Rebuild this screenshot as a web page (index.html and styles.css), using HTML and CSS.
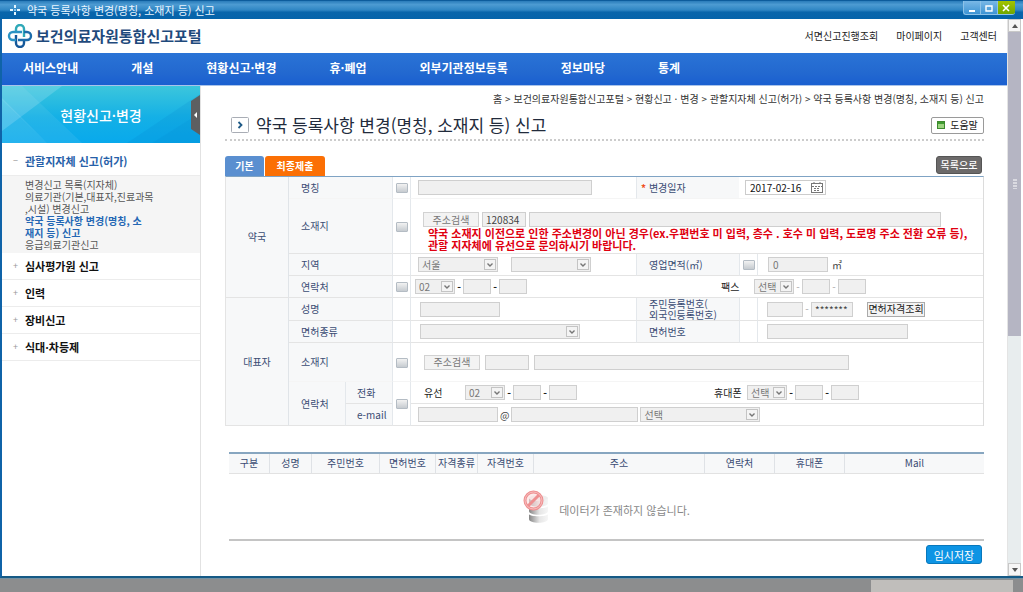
FILE: index.html
```html
<!DOCTYPE html>
<html lang="ko">
<head>
<meta charset="utf-8">
<title>약국 등록사항 변경(명칭, 소재지 등) 신고</title>
<link rel="stylesheet" href="styles.css">
</head>
<body>
<header class="titlebar">
  <svg class="titlebar-icon" viewBox="0 0 12 12" width="12" height="12" fill="none" stroke="#e4f6ff" stroke-width="2"><path d="M6 1v3M6 8v3M1 6h3M8 6h3"/><circle cx="6" cy="6" r="1" fill="#9fdcff" stroke="none"/></svg>
  <span class="titlebar-text">약국 등록사항 변경(명칭, 소재지 등) 신고</span>
  <div class="win-buttons">
    <button class="win-btn" aria-label="최소화"><svg viewBox="0 0 16 12" width="16" height="12"><path d="M5 8h6v2H5z" fill="#fff"/></svg></button>
    <button class="win-btn" aria-label="최대화"><svg viewBox="0 0 16 12" width="16" height="12"><path d="M5 4h6v5H5z" fill="none" stroke="#fff" stroke-width="1.4"/></svg></button>
    <button class="win-btn win-close" aria-label="닫기"><svg viewBox="0 0 16 12" width="16" height="12"><path d="M5 3l6 6M11 3L5 9" stroke="#fff" stroke-width="1.6"/></svg></button>
  </div>
</header>

<div class="window">
  <div class="page">
    <div class="top">
      <a class="logo" href="#">
        <svg viewBox="0 0 26 24" width="26" height="24" fill="none" stroke-width="2.4">
          <path d="M9 8V5a4 4 0 0 1 8 0v8" stroke="#2fa9b8"/>
          <path d="M17 16v3a4 4 0 0 1-8 0v-8" stroke="#15589a"/>
          <path d="M9 16H6a4 4 0 0 1 0-8h9" stroke="#2b93c4"/>
          <path d="M17 8h3a4 4 0 0 1 0 8h-9" stroke="#1c6cab"/>
        </svg>
        <span>보건의료자원통합신고포털</span>
      </a>
      <nav class="util">
        <a href="#">서면신고진행조회</a><a href="#">마이페이지</a><a href="#">고객센터</a>
      </nav>
    </div>
    <nav class="gnb">
      <a href="#">서비스안내</a><a href="#">개설</a><a href="#">현황신고·변경</a><a href="#">휴·폐업</a><a href="#">외부기관정보등록</a><a href="#">정보마당</a><a href="#">통계</a>
    </nav>
    <div class="columns">
      <aside class="side">
        <div class="side-title">
          <svg class="side-bg" viewBox="0 0 198 57" preserveAspectRatio="none"><path d="M0 0h60L0 45z" fill="#fff" opacity=".16"/><path d="M0 12L45 57H0z" fill="#fff" opacity=".12"/><path d="M0 0h20L80 57H45L0 14z" fill="#fff" opacity=".07"/><path d="M125 57L198 8v49z" fill="#0077c8" opacity=".14"/><path d="M150 57l48-30v30z" fill="#0077c8" opacity=".1"/></svg>
          <span>현황신고·변경</span>
          <button class="side-fold" aria-label="메뉴 접기"><svg viewBox="0 0 9 40" width="9" height="40"><path d="M9 0L0 6v28l9 6z" fill="#5d5f61"/><path d="M6 17v6l-3-3z" fill="#fff"/></svg></button>
        </div>
        <ul class="menu">
          <li class="open"><a class="menu-link" href="#"><i>−</i>관할지자체 신고(허가)</a>
            <ul class="sub">
              <li><a href="#">변경신고 목록(지자체)</a></li>
              <li><a href="#">의료기관(기본,대표자,진료과목<br>,시설) 변경신고</a></li>
              <li><a class="on" href="#">약국 등록사항 변경(명칭, 소<br>재지 등) 신고</a></li>
              <li><a href="#">응급의료기관신고</a></li>
            </ul>
          </li>
          <li><a class="menu-link" href="#"><i>+</i>심사평가원 신고</a></li>
          <li><a class="menu-link" href="#"><i>+</i>인력</a></li>
          <li><a class="menu-link" href="#"><i>+</i>장비신고</a></li>
          <li><a class="menu-link" href="#"><i>+</i>식대·차등제</a></li>
        </ul>
      </aside>

      <main class="main">
        <p class="crumb">홈 &gt; 보건의료자원통합신고포털 &gt; 현황신고 · 변경 &gt; 관할지자체 신고(허가) &gt; 약국 등록사항 변경(명칭, 소재지 등) 신고</p>
        <div class="heading">
          <svg viewBox="0 0 18 16" width="18" height="16"><rect x=".5" y=".5" width="17" height="15" rx="1" fill="#fff" stroke="#a9adb5"/><path d="M7.500 5l3 3-3 3" fill="none" stroke="#1e5a86" stroke-width="1.800"/></svg>
          <h1>약국 등록사항 변경(명칭, 소재지 등) 신고</h1>
          <button class="help"><i></i>도움말</button>
        </div>
        <div class="tabs">
          <button class="tab">기본</button><button class="tab tab-final">최종제출</button>
          <button class="list-btn">목록으로</button>
        </div>

        <table class="form">
          <colgroup><col class="c-group"><col class="c-label"><col class="c-sub"><col class="c-check"><col><col class="c-label2"><col class="c-check"><col></colgroup>
          <tr class="h-s no-line">
            <th rowspan="4" class="group">약국</th><th colspan="2">명칭</th>
            <td class="chk"><input type="checkbox" disabled aria-label="명칭 변경"></td>
            <td><div class="row"><input class="w-174" disabled aria-label="명칭"></div></td>
            <th class="inner"><label for="date"><b class="req">*</b> 변경일자</label></th>
            <td colspan="2"><div class="row date-row"><span class="date"><input id="date" value="2017-02-16"><button aria-label="달력"><svg viewBox="0 0 12 11" width="12" height="11" fill="none" stroke="#777"><rect x=".5" y="1.500" width="11" height="9"/><path d="M1 4.500h10M3 0v3M9 0v3M3 6.500h6M3 8.500h6" stroke-dasharray="2 1"/></svg></button></span></div></td>
          </tr>
          <tr class="h-addr">
            <th colspan="2">소재지</th><td class="chk"><input type="checkbox" disabled aria-label="소재지 변경"></td>
            <td colspan="4" class="addr"><div class="row in-5"><button class="find" disabled>주소검색</button><input class="w-44 strong" value="120834" disabled aria-label="우편번호"><input class="w-412" disabled aria-label="주소"></div>
              <p class="warn">약국 소재지 이전으로 인한 주소변경이 아닌 경우(ex.우편번호 미 입력, 층수 . 호수 미 입력, 도로명 주소 전환 오류 등),<br>관할 지자체에 유선으로 문의하시기 바랍니다.</p></td>
          </tr>
          <tr class="h-s">
            <th colspan="2">지역</th><td class="chk"></td>
            <td><div class="row gap-l"><select class="w-80" disabled aria-label="시도"><option>서울</option></select><select class="w-80" disabled aria-label="시군구"><option></option></select></div></td>
            <th class="inner"><label for="area">영업면적(㎡)</label></th><td class="chk"><input type="checkbox" disabled aria-label="영업면적 변경"></td>
            <td><div class="row in-3"><input id="area" class="w-60" value="0" disabled><span>㎡</span></div></td>
          </tr>
          <tr class="h-s">
            <th colspan="2">연락처</th><td class="chk"><input type="checkbox" disabled aria-label="연락처 변경"></td>
            <td><div class="row tel in-out"><select class="w-40" disabled aria-label="지역번호"><option>02</option></select><b>-</b><input class="w-28" disabled aria-label="국번"><b>-</b><input class="w-28" disabled aria-label="번호"></div></td>
            <td colspan="3"><div class="row tel fax"><span class="cap">팩스</span><select class="w-40" disabled aria-label="팩스 지역번호"><option>선택</option></select><b class="dim">-</b><input class="w-28" disabled aria-label="팩스 국번"><b class="dim">-</b><input class="w-28" disabled aria-label="팩스 번호"></div></td>
          </tr>
          <tr class="h-s">
            <th rowspan="5" class="group">대표자</th><th colspan="2">성명</th><td class="chk"></td>
            <td><div class="row in-2"><input class="w-80" disabled aria-label="성명"></div></td>
            <th class="inner tight">주민등록번호(<br>외국인등록번호)</th><td class="chk"></td>
            <td><div class="row tel in-2"><input class="w-36" disabled aria-label="주민등록번호 앞"><b class="dim">-</b><input class="w-42 strong" value="*******" disabled aria-label="주민등록번호 뒤"><button class="license">면허자격조회</button></div></td>
          </tr>
          <tr class="h-s">
            <th colspan="2">면허종류</th><td class="chk"></td>
            <td><div class="row in-2"><select class="w-160" disabled aria-label="면허종류"><option></option></select></div></td>
            <th class="inner"><label for="lic">면허번호</label></th><td class="chk"></td>
            <td><div class="row in-2"><input id="lic" class="w-141" disabled></div></td>
          </tr>
          <tr class="h-m no-line">
            <th colspan="2">소재지</th><td class="chk"><input type="checkbox" disabled aria-label="대표자 소재지 변경"></td>
            <td colspan="4"><div class="row gap-m in-7"><button class="find" disabled>주소검색</button><input class="w-44" disabled aria-label="대표자 우편번호"><input class="w-315" disabled aria-label="대표자 주소"></div></td>
          </tr>
          <tr class="h-s">
            <th rowspan="2">연락처</th><th class="split">전화</th><td class="chk" rowspan="2"><input type="checkbox" disabled aria-label="대표자 연락처 변경"></td>
            <td><div class="row tel in-7"><span class="cap-wide">유선</span><select class="w-40" disabled aria-label="유선 지역번호"><option>02</option></select><b>-</b><input class="w-28" disabled aria-label="유선 국번"><b>-</b><input class="w-28" disabled aria-label="유선 번호"></div></td>
            <td colspan="3"><div class="row tel mobile"><span class="cap-near">휴대폰</span><select class="w-40" disabled aria-label="휴대폰 앞자리"><option>선택</option></select><b>-</b><input class="w-28" disabled aria-label="휴대폰 국번"><b>-</b><input class="w-28" disabled aria-label="휴대폰 번호"></div></td>
          </tr>
          <tr class="h-s">
            <th class="split">e-mail</th>
            <td colspan="4"><div class="row gap-s"><input class="w-80" disabled aria-label="이메일 아이디"><span>@</span><input class="w-127" disabled aria-label="이메일 도메인"><select class="w-120" disabled aria-label="도메인 선택"><option>선택</option></select></div></td>
          </tr>
        </table>

        <table class="list">
          <colgroup><col class="l-41"><col class="l-42"><col class="l-68"><col class="l-56"><col class="l-42"><col class="l-56"><col><col class="l-70"><col class="l-70"><col class="l-139"></colgroup>
          <thead><tr><th>구분</th><th>성명</th><th>주민번호</th><th>면허번호</th><th>자격종류</th><th>자격번호</th><th>주소</th><th>연락처</th><th>휴대폰</th><th>Mail</th></tr></thead>
          <tbody><tr><td colspan="10"><div class="empty">
            <svg viewBox="0 0 26 36" width="26" height="36">
              <defs><linearGradient id="db"><stop offset="0" stop-color="#858585"/><stop offset=".55" stop-color="#e6e6e6"/><stop offset="1" stop-color="#f6f6f6"/></linearGradient></defs>
              <path d="M6 25c0 3 19 3 19 0v5c0 5-19 5-19 0z" fill="url(#db)"/>
              <path d="M6 17c0 3 19 3 19 0v5c0 5-19 5-19 0z" fill="url(#db)"/>
              <path d="M6 9c0 3 19 3 19 0v5c0 5-19 5-19 0z" fill="url(#db)"/>
              <ellipse cx="15.500" cy="9" rx="9.500" ry="3" fill="#eee"/>
              <circle cx="10.500" cy="11.500" r="8.500" fill="#fbdcdc" fill-opacity=".6" stroke="#ee8f90" stroke-width="3"/>
              <path d="M5 17L16 6" stroke="#ee8f90" stroke-width="3"/><circle cx="10.500" cy="11.500" r="8.500" fill="none" stroke="#f9c9c9" stroke-width=".8"/>
            </svg>
            <span>데이터가 존재하지 않습니다.</span></div></td></tr></tbody>
        </table>
        <div class="actions"><button class="save">임시저장</button></div>
      </main>
    </div>
  </div>
  <div class="scroll">
    <span class="scroll-btn"><svg viewBox="0 0 6 4" width="6" height="4"><path d="M0 4l3-4 3 4z" fill="#555"/></svg></span>
    <span class="scroll-thumb"><svg viewBox="0 0 4 10" width="4" height="10"><path d="M0 1h4M0 4h4M0 7h4M0 10h4" stroke="#fff"/></svg></span>
    <span class="scroll-track"></span>
    <span class="scroll-btn"><svg viewBox="0 0 6 4" width="6" height="4"><path d="M0 0l3 4 3-4z" fill="#555"/></svg></span>
  </div>
</div>
<footer class="hbar"><span class="hbar-thumb"></span></footer>
</body>
</html>
```

FILE: styles.css
```css
* { box-sizing: border-box; }
body {
  margin: 0;
  min-height: 100vh;
  display: flex;
  flex-direction: column;
  font: 10px/12px "Noto Sans CJK KR", "Noto Sans", sans-serif;
  color: #444;
  background: #fff;
}
button, input, select { font: inherit; color: inherit; margin: 0; }
button { cursor: pointer; padding: 0; }
a { color: inherit; text-decoration: none; }
ul { list-style: none; margin: 0; padding: 0; }
i { font-style: normal; }
h1, p { margin: 0; }
table { border-collapse: separate; border-spacing: 0; table-layout: fixed; width: 100%; }

/* window frame */
.titlebar {
  display: flex;
  align-items: center;
  gap: 6px;
  height: 19px;
  padding: 0 8px 0 9px;
  border-top: 1px solid #0d5c9c;
  background: linear-gradient(#2a7cba 0, #4d9bd2 20%, #2f86c4 50%, #0965ab 62%, #0563aa 100%);
}
.titlebar-text { flex: 1; color: #e9f5ff; font-size: 11px; line-height: 16px; }
.win-buttons { display: flex; align-self: flex-start; }
.win-btn {
  height: 14px;
  width: 17px;
  border: 1px solid #8cc2e8;
  border-top: 0;
  border-right: 0;
  background: linear-gradient(#7ab8e6, #3d94d4);
  display: flex;
  align-items: center;
}
.win-btn:first-child { border-radius: 0 0 0 3px; }
.win-close { width: 18px; background: linear-gradient(#a4c400, #6fa600); border-radius: 0 0 3px 0; }
.window { flex: 1; display: flex; border-left: 2px solid #0f63a8; border-bottom: 2px solid #155a86; }
.page { flex: 1; min-width: 0; display: flex; flex-direction: column; }

/* site header */
.top { display: flex; align-items: center; justify-content: space-between; height: 34px; padding: 0 10px 0 5px; }
.logo { display: flex; align-items: center; gap: 3px; color: #1f4a7c; font-size: 15px; font-weight: 700; line-height: 20px; }
.util { display: flex; gap: 18px; color: #222; }
.gnb {
  display: flex;
  align-items: center;
  gap: 53px;
  height: 33px;
  padding: 0 21px 2px;
  color: #fff;
  font-size: 12px;
  font-weight: 700;
  line-height: 16px;
  background: linear-gradient(#2a73d6, #2369d0 60%, #1a5fd0);
  border-bottom: 1px solid #a9c3ea;
}
.columns { flex: 1; display: flex; }

/* side menu */
.side { width: 199px; flex: none; border-right: 1px solid #e2e2e2; }
.side-title {
  position: relative;
  display: flex;
  align-items: center;
  justify-content: center;
  height: 57px;
  color: #fff;
  font-size: 14px;
  font-weight: 500;
  line-height: 20px;
  background: linear-gradient(#3cc6dc, #14b0e6 55%, #08a9ec);
}
.side-title span { position: relative; }
.side-bg { position: absolute; inset: 0; width: 100%; height: 100%; }
.side-fold { position: absolute; right: 0; top: 9px; border: 0; background: none; height: 40px; }
.menu > li { border-bottom: 1px solid #ececec; }
.menu > .open { border-bottom: 0; }
.menu-link { display: flex; align-items: center; height: 26px; padding-left: 11px; color: #111; font-size: 11px; font-weight: 700; }
.menu-link i { width: 12px; color: #999; font-size: 9px; font-weight: 400; }
.open > .menu-link { height: 32px; padding-top: 4px; color: #2660a8; }
.sub { padding: 3px 0 2px 23px; background: #f5f5f5; border-top: 1px solid #ececec; line-height: 12px; color: #555; }
.sub .on { color: #2467b4; font-weight: 700; }

/* main column */
.main { flex: 1; min-width: 0; padding: 5px 23px 12px 24px; }
.crumb { text-align: right; line-height: 16px; white-space: nowrap; color: #333; }
.heading { display: flex; align-items: center; gap: 7px; height: 34px; padding: 4px 0 0 6px; border-bottom: 2px dotted #ccc; }
.heading h1 { flex: 1; font-size: 17px; font-weight: 400; line-height: 22px; color: #222b3c; }
.help {
  display: flex;
  align-items: center;
  justify-content: center;
  gap: 5px;
  width: 53px;
  height: 17px;
  border: 1px solid #9a9a9a;
  border-radius: 2px;
  background: #fff;
  color: #222;
}
.help i { width: 8px; height: 8px; border: 1px solid #3d8a2e; background: linear-gradient(#3f9a30 25%, #9bd37f 25%); }
.tabs { display: flex; gap: 1px; margin-top: 15px; }
.tab {
  width: 39px;
  height: 20px;
  border: 0;
  border-radius: 3px 3px 0 0;
  background: #5a8fd0;
  color: #fff;
  font-weight: 700;
}
.tab-final { width: 60px; background: #fb6f04; }
.list-btn { margin-left: auto; margin-right: 2px; width: 46px; height: 18px; border: 1px solid #555; border-radius: 3px; background: #6c6a6a; color: #fff; font-weight: 500; }

/* declaration form */
.form { border-top: 1px solid #7fa3c4; border-right: 1px solid #dcdcdc; border-left: 1px solid #e4e4e4; }
.c-group { width: 63px; }
.c-label { width: 56px; }
.c-sub { width: 47px; }
.c-check { width: 19px; }
.c-label2 { width: 103px; }
.form th, .form td { padding: 0; border-bottom: 1px solid #e4e4e4; }
.form th { padding-left: 12px; text-align: left; font-weight: 400; color: #3a4c74; background: #f7f8f9; }
.form .group { padding: 0; text-align: center; border-right: 1px solid #e0e4e8; }
.form .no-line th, .form .no-line td { border-bottom-color: #f5f5f5; }
.form .no-line .group { border-bottom-color: #e4e4e4; }
.form .chk { border-left: 1px solid #e4e8ec; border-right: 1px solid #e4e8ec; text-align: center; line-height: 10px; }
.form .inner { border-left: 1px solid #e4e8ec; }
.form .split { border-left: 1px solid #e4e8ec; padding-left: 11px; }
.form .tight { line-height: 11px; }
.h-s { height: 22px; }
.h-m { height: 39px; }
.h-addr { height: 55px; }
.req { color: #f0501e; }
.form th:has(.req) { padding-left: 4px; }
.row { display: flex; align-items: center; gap: 3px; padding-left: 7px; line-height: 14px; }
.gap-s { gap: 2px; }
.gap-m { gap: 5px; }
.gap-l { gap: 13px; }
.in-2 { padding-left: 9px; }
.in-3 { padding-left: 10px; gap: 4px; }
.in-5 { padding-left: 12px; }
.in-7 { padding-left: 13px; }
.in-out { padding-left: 4px; }
.date-row { padding-left: 6px; }
.fax { padding-left: 85px; }
.mobile { padding-left: 78px; }
.cap { width: 33px; color: #222; }
.cap-wide { width: 41px; color: #222; }
.cap-near { width: 33px; color: #222; white-space: nowrap; }
.tel { gap: 0; }
.tel b { width: 8px; text-align: center; color: #222; line-height: 12px; }
.tel .dim { color: #aaa; font-weight: 400; }
input, select { height: 15px; border: 1px solid #cfcfcf; border-radius: 0; background: #f0f0f0; color: #777; padding: 0 4px; opacity: 1; }
input.strong { color: #444; padding: 0 3px; }
select {
  appearance: none;
  padding: 0 14px 0 3px;
  line-height: 12px;
  background: #f0f0f0 url("data:image/svg+xml,%3Csvg xmlns='http://www.w3.org/2000/svg' width='12' height='11'%3E%3Crect x='.5' y='.5' width='11' height='10' fill='%23f4f4f4' stroke='%23c4c4c4'/%3E%3Cpath d='M3.500 4.500l2.500 2.500 2.500-2.500' fill='none' stroke='%23777' stroke-width='1.400'/%3E%3C/svg%3E") right 1px center no-repeat;
}
input[type="checkbox"] { appearance: none; width: 12px; height: 10px; padding: 0; border: 1px solid #b4bcc4; border-radius: 1px; background: linear-gradient(#f2f2f2, #c6cbd0); vertical-align: middle; }
.w-28 { width: 28px; } .w-36 { width: 36px; } .w-40 { width: 40px; } .w-42 { width: 42px; } .w-44 { width: 44px; }
.w-60 { width: 60px; } .w-80 { width: 80px; } .w-120 { width: 120px; } .w-127 { width: 127px; } .w-141 { width: 141px; }
.w-160 { width: 160px; } .w-174 { width: 174px; } .w-315 { width: 315px; } .w-412 { width: 412px; }
.find { width: 56px; height: 15px; border: 1px solid #d2d2d2; background: #f3f3f3; color: #777; line-height: 12px; }
.license { width: 58px; height: 15px; margin-left: 14px; border: 1px solid #aaa; background: #f3f3f3; color: #222; line-height: 12px; white-space: nowrap; font-size: 10px; }
.date { display: flex; align-items: center; justify-content: space-between; width: 81px; height: 15px; padding-right: 2px; border: 1px solid #ccc; background: #fff; }
.date input { width: 64px; height: 12px; border: 0; background: none; color: #111; font-size: 10px; }
.date button { display: flex; border: 0; background: none; }
.form .addr { vertical-align: bottom; }
.warn { padding: 0 0 2px 17px; color: #e00010; font-size: 11px; font-weight: 700; line-height: 12px; white-space: nowrap; }

/* result list */
.list { width: auto; min-width: calc(100% - 4px); margin: 26px 0 0 4px; border-top: 2px solid #87a6c0; border-bottom: 2px solid #c4c4c4; }
.l-41 { width: 41px; } .l-42 { width: 42px; } .l-56 { width: 56px; } .l-68 { width: 68px; } .l-70 { width: 70px; } .l-139 { width: 139px; }
.list th { height: 20px; padding: 0 0 2px; border-right: 1px solid #dfe2e6; border-bottom: 1px solid #e2e2e2; background: #f7f8f9; color: #3a4c74; font-weight: 400; white-space: nowrap; }
.list th:last-child { border-right: 0; }
.list td { height: 65px; padding: 0; }
.empty { display: flex; align-items: center; justify-content: center; gap: 10px; font-size: 11px; color: #888; }
.empty span { padding-top: 6px; }
.actions { display: flex; justify-content: flex-end; padding: 4px 2px 0 0; }
.save { width: 56px; height: 19px; border: 1px solid #0878bc; border-radius: 3px; background: #0d94e4; color: #fff; font-size: 11px; line-height: 14px; }

/* scrollbars */
.scroll { display: flex; flex-direction: column; width: 14px; margin-right: 2px; border-left: 1px solid #e4e4e4; background: #e8edee; }
.scroll-btn { height: 13px; display: flex; align-items: center; justify-content: center; border: 1px solid #c8c8c8; background: #f6f6f6; }
.scroll-thumb { flex: 305; display: flex; align-items: center; justify-content: center; background: #b5b5c3; }
.scroll-track { flex: 227; }
.hbar { height: 14px; display: flex; justify-content: flex-end; padding: 1px 10px 0 0; background: #8c8d8e; border-top: 1px solid #7392a4; }
.hbar-thumb { width: 14%; background: #c0bebb; }
```
